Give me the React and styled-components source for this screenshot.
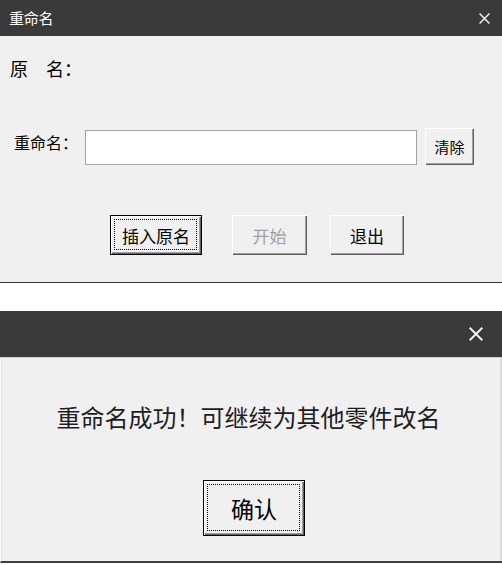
import React from 'react'
import styled, { createGlobalStyle, css } from 'styled-components'

const GlobalStyle = createGlobalStyle`
  html, body {
    margin: 0;
    padding: 0;
    background: #ffffff;
  }

  body {
    font-family: 'Noto Sans CJK SC', 'Liberation Sans', sans-serif;
    color: #000;
  }
`

const Page = styled.div`
  width: 502px;
  display: flex;
  flex-direction: column;
`

const TitleBar = styled.div`
  height: ${({ $height }) => $height}px;
  background-color: #3a3a3a;
  color: #ffffff;
  display: flex;
  align-items: center;
  justify-content: space-between;
  padding-left: 9px;
  padding-right: ${({ $closeRight }) => $closeRight}px;
  box-sizing: border-box;
  border-bottom: ${({ $line }) => ($line ? '1px solid #cfcfcf' : 'none')};
`

const TitleText = styled.span`
  font-size: 15px;
  line-height: 20px;
  letter-spacing: -0.3px;
`

const CloseIcon = ({ size, stroke }) => (
  <svg width={size} height={size} viewBox="0 0 10 10">
    <path d="M0.5 0.5 L9.5 9.5 M9.5 0.5 L0.5 9.5" stroke="#f2f2f2" strokeWidth={stroke} fill="none" />
  </svg>
)

const Body = styled.div`
  background-color: #f0f0f0;
  border-bottom: 1px solid #333333;
`

const RenameBody = styled(Body)`
  height: 246px;
  display: flex;
  flex-direction: column;
`

const OriginalRow = styled.div`
  margin-top: 21px;
  padding-left: 10px;
  font-size: 18px;
  line-height: 22px;
`

const RenameRow = styled.div`
  margin-top: 49px;
  display: flex;
  align-items: flex-start;
  padding-left: 14px;
`

const Label = styled.span`
  width: 71px;
  font-size: 16px;
  line-height: 20px;
  margin-top: 4px;
`

const NameInput = styled.input`
  width: 332px;
  height: 35px;
  margin-top: 2px;
  box-sizing: border-box;
  border: 1px solid #a3a3a3;
  background: #ffffff;
  outline: none;
  padding: 0 4px;
  font-family: inherit;
  font-size: 15px;
`

const ButtonRow = styled.div`
  margin-top: 50px;
  display: flex;
  padding-left: 110px;
`

const WinButton = styled.button`
  position: relative;
  box-sizing: border-box;
  width: ${({ $width }) => $width}px;
  height: ${({ $height }) => $height}px;
  margin-left: ${({ $gap }) => $gap || 0}px;
  padding: 0;
  background-color: #f0f0f0;
  font-family: inherit;
  font-size: ${({ $size }) => $size}px;
  line-height: 1;
  color: ${({ disabled }) => (disabled ? '#a0a0a0' : '#000000')};
  border: none;
  box-shadow:
    inset 1px 1px #ffffff,
    inset -1px -1px #5f5f5f,
    inset -2px -2px #a0a0a0;
  cursor: default;

  ${({ $default }) =>
    $default &&
    css`
      border: 1px solid #000000;
      box-shadow:
        inset 1px 1px #ffffff,
        inset -1px -1px #5f5f5f,
        inset -2px -2px #a0a0a0;

      &::after {
        content: '';
        position: absolute;
        inset: 3px 4px 4px 3px;
        border: 1px dotted #000000;
      }
    `}
`

const MessageBody = styled(Body)`
  display: flex;
  flex-direction: column;
  align-items: center;
  padding-top: 43px;
  padding-bottom: 25px;
  border-left: 1px solid #ffffff;
  box-shadow: inset 1px 0 #e4e4e4, inset -2px 0 #dcdcdc;
  border-bottom: 2px solid #3f3f3f;
`

const Message = styled.div`
  font-size: 24px;
  line-height: 32px;
  color: #1e1e1e;
  margin-right: 6px;
`

const Spacer = styled.div`
  height: 28px;
  background: #ffffff;
`

const ConfirmRow = styled.div`
  margin-top: 47px;
  margin-left: 5px;
  display: flex;
`

export default function App() {
  return (
    <>
      <GlobalStyle />
      <Page>
        <TitleBar $height={36} $closeRight={12}>
          <TitleText>重命名</TitleText>
          <CloseIcon size={11} stroke={1.3} />
        </TitleBar>
        <RenameBody>
          <OriginalRow>原　名：</OriginalRow>
          <RenameRow>
            <Label>重命名：</Label>
            <NameInput type="text" defaultValue="" />
            <WinButton $width={49} $height={37} $size={15} $gap={8}>
              清除
            </WinButton>
          </RenameRow>
          <ButtonRow>
            <WinButton $default $width={92} $height={40} $size={17}>
              插入原名
            </WinButton>
            <WinButton disabled $width={75} $height={40} $size={17} $gap={30}>
              开始
            </WinButton>
            <WinButton $width={74} $height={40} $size={17} $gap={23}>
              退出
            </WinButton>
          </ButtonRow>
        </RenameBody>
        <Spacer />
        <TitleBar $height={47} $closeRight={19} $line>
          <span />
          <CloseIcon size={14} stroke={1.4} />
        </TitleBar>
        <MessageBody>
          <Message>重命名成功！可继续为其他零件改名</Message>
          <ConfirmRow>
            <WinButton $default $width={102} $height={56} $size={23}>
              确认
            </WinButton>
          </ConfirmRow>
        </MessageBody>
      </Page>
    </>
  )
}
